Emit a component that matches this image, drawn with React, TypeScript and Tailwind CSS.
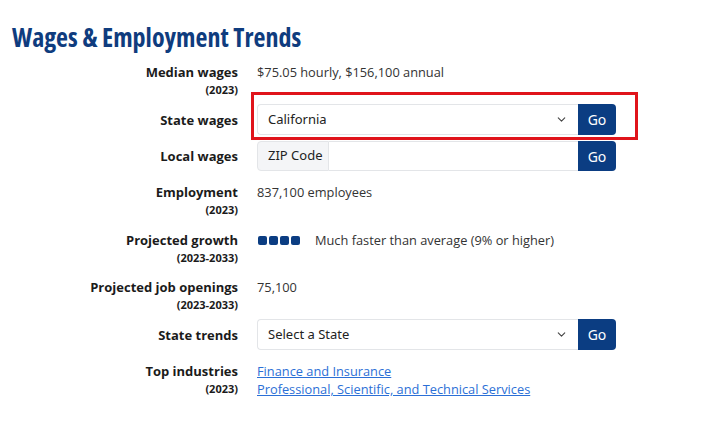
import { ChevronDown } from "lucide-react"

const label = "text-right text-[13px] leading-[18px] font-bold text-[#1b1b1b]"
const year = "text-[11px] leading-[18px] font-bold text-[#1b1b1b]"
const value = "text-[12.8px] leading-[18px] text-[#333]"
const ui = { fontFamily: '"Noto Sans", "Open Sans", sans-serif' }

function GoButton() {
  return (
    <button
      style={ui}
      className="w-[38px] shrink-0 bg-[#0b3d82] text-white text-[14px] rounded-r-[4px] flex items-center justify-center"
    >
      Go
    </button>
  )
}

function SelectBox({ text }: { text: string }) {
  return (
    <div className="flex h-[31px] w-[359px]">
      <div
        style={ui}
        className="flex-1 flex items-center justify-between pl-[10px] pr-[10px] border border-[#e3e5e8] border-r-0 rounded-l-[4px] bg-white text-[13px] text-[#222]"
      >
        <span>{text}</span>
        <ChevronDown className="h-[13px] w-[13px] text-[#444]" strokeWidth={2} />
      </div>
      <GoButton />
    </div>
  )
}

function Row({ name, sub, children, className = "" }: { name: string; sub?: string; children: React.ReactNode; className?: string }) {
  return (
    <div className={`grid grid-cols-[226px_359px] gap-x-[19px] ${className}`}>
      <div className={label}>
        <div>{name}</div>
        {sub && <div className={year}>{sub}</div>}
      </div>
      <div>{children}</div>
    </div>
  )
}

export default function App() {
  return (
    <main className="w-[727px] h-[428px] bg-white px-3 pt-[20px]" style={{ fontFamily: '"Open Sans", sans-serif' }}>
      <h1 className="text-[26px] leading-[34px] font-bold text-[#0f3c7e]" style={{ fontStretch: "75%" }}>
        Wages &amp; Employment Trends
      </h1>

      <Row name="Median wages" sub="(2023)" className="mt-[9px]">
        <div className={value}>$75.05 hourly, $156,100 annual</div>
      </Row>

      <div className="grid grid-cols-[226px_359px] gap-x-[19px] mt-[5px] items-center">
        <div className={label}>State wages</div>
        <div className="relative">
          <SelectBox text="California" />
          <div className="absolute -left-[6px] -right-[22px] -top-[12px] -bottom-[5px] border-[3px] border-[#e0141b] pointer-events-none" />
        </div>
      </div>

      <div className="grid grid-cols-[226px_359px] gap-x-[19px] mt-[6px] items-center">
        <div className={label}>Local wages</div>
        <div className="flex h-[30px] w-[359px]">
          <div
            style={ui}
            className="w-[72px] flex items-center pl-[10px] bg-[#f4f5f7] border border-[#e3e5e8] rounded-l-[4px] text-[13px] text-[#222]"
          >
            ZIP Code
          </div>
          <div className="flex-1 border border-l-0 border-r-0 border-[#e3e5e8] bg-white" />
          <GoButton />
        </div>
      </div>

      <Row name="Employment" sub="(2023)" className="mt-[12px]">
        <div className={value}>837,100 employees</div>
      </Row>

      <Row name="Projected growth" sub="(2023-2033)" className="mt-[12px]">
        <div className="flex items-center h-[18px]">
          <div className="flex gap-[2px] pl-[1px]">
            <span className="h-[9px] w-[9px] rounded-[2px] bg-[#0b3d82]" />
            <span className="h-[9px] w-[9px] rounded-[2px] bg-[#0b3d82]" />
            <span className="h-[9px] w-[9px] rounded-[2px] bg-[#0b3d82]" />
            <span className="h-[9px] w-[9px] rounded-[2px] bg-[#0b3d82]" />
          </div>
          <span className={`${value} ml-[15px]`}>Much faster than average (9% or higher)</span>
        </div>
      </Row>

      <Row name="Projected job openings" sub="(2023-2033)" className="mt-[11px]">
        <div className={value}>75,100</div>
      </Row>

      <div className="grid grid-cols-[226px_359px] gap-x-[19px] mt-[5px] items-center">
        <div className={label}>State trends</div>
        <SelectBox text="Select a State" />
      </div>

      <Row name="Top industries" sub="(2023)" className="mt-[12px]">
        <div className="text-[12.8px] leading-[18px] text-[#2b6fd6]">
          <a href="#" className="underline block">Finance and Insurance</a>
          <a href="#" className="underline block">Professional, Scientific, and Technical Services</a>
        </div>
      </Row>
    </main>
  )
}
